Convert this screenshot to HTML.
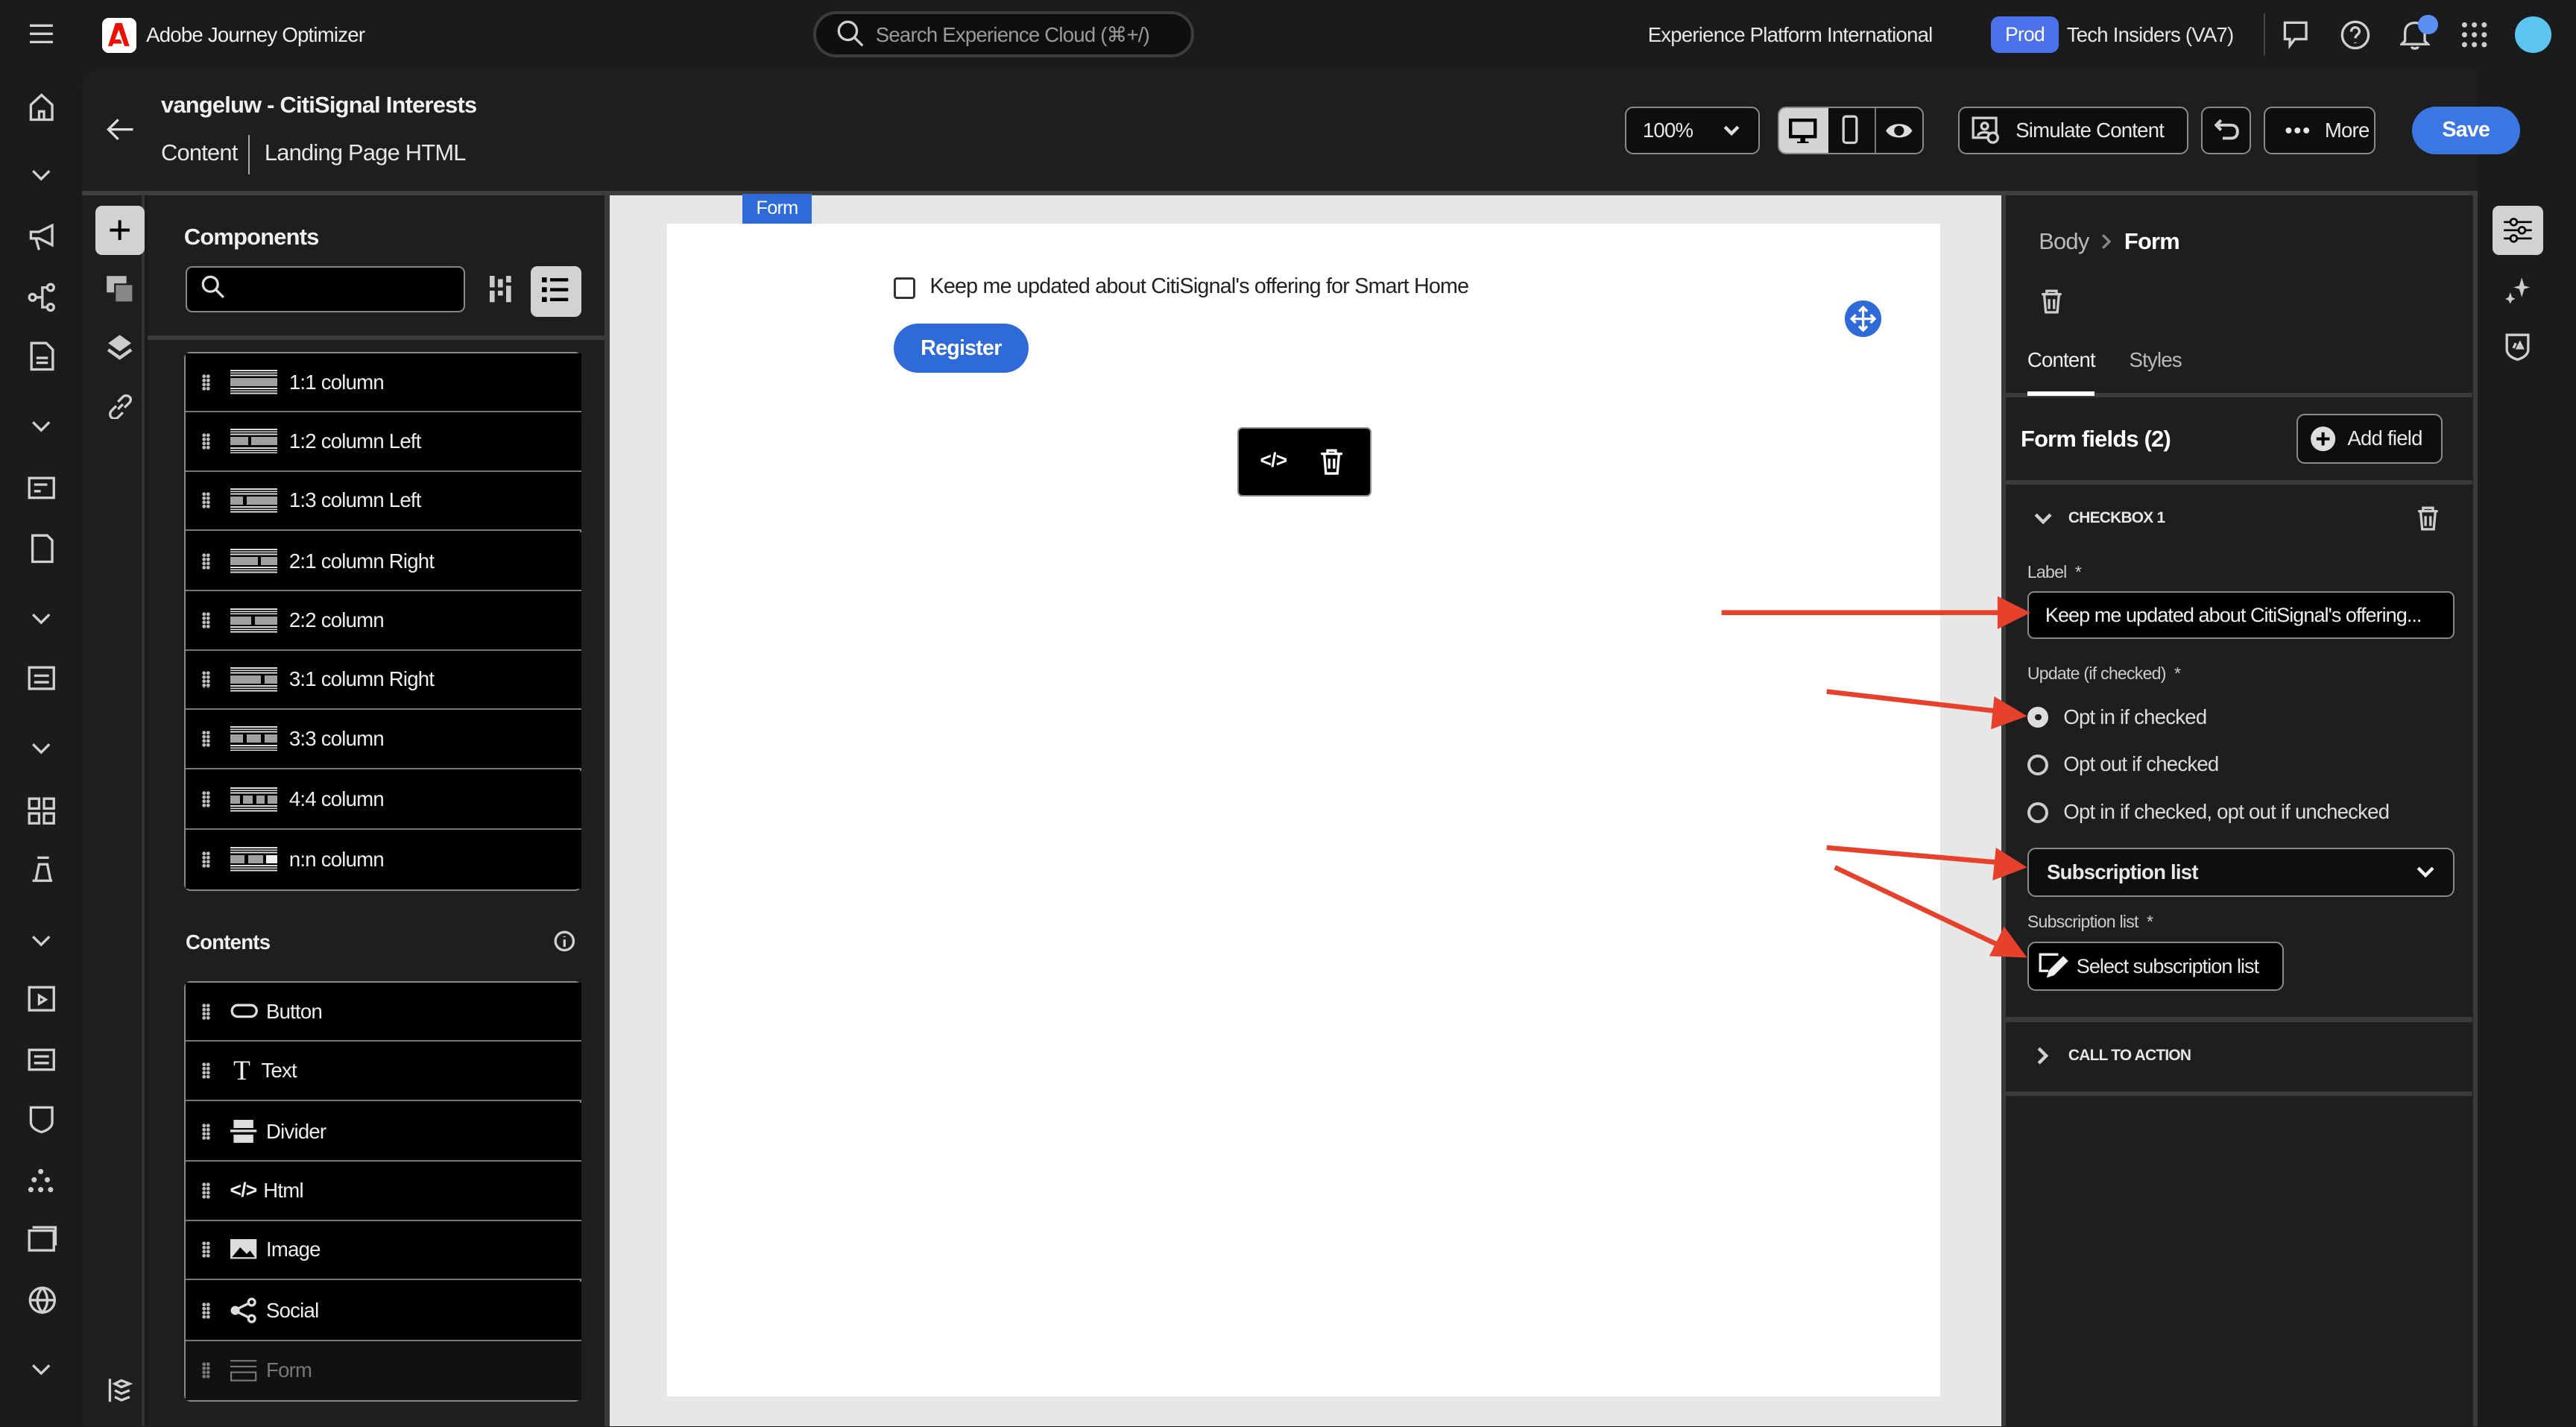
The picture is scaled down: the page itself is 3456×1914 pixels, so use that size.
<!DOCTYPE html>
<html><head><meta charset="utf-8">
<style>
*{box-sizing:border-box;margin:0;padding:0}
html,body{width:3456px;height:1914px;overflow:hidden;background:#1b1b1b}
#w{zoom:2.20408;width:1568px;height:868px;position:relative;font-family:"Liberation Sans",sans-serif;color:#e6e6e6;font-size:13px;background:#1b1b1b;letter-spacing:-0.35px}
.a{position:absolute}
.ico{position:absolute;stroke:#d0d0d0;fill:none;stroke-width:1.5}
.btn{position:absolute;border:1px solid #8a8a8a;border-radius:5px;background:#0e0e0e;color:#e8e8e8;display:flex;align-items:center;white-space:nowrap}
.row{position:absolute;left:113px;width:241px;height:36px;background:#000;border-bottom:1px solid #777;display:flex;align-items:center;font-size:12.5px;color:#eee}
.row .d{width:5px;height:10px;margin-left:10px;margin-right:12px;background-image:radial-gradient(circle,#bbb 1px,transparent 1.2px);background-size:2.5px 2.5px}
.lay{width:29px;height:15px;margin-right:7px;position:relative;flex:none}
.lay:before,.lay:after{content:"";position:absolute;left:0;width:29px;height:4px;background:repeating-linear-gradient(#ddd 0 0.8px,transparent 0.8px 1.5px)}
.lay:before{top:0}.lay:after{bottom:0}
.lay i{position:absolute;top:5px;height:5px;background:#a0a0a0}
.radio{position:absolute;left:1234px;width:13px;height:13px;border:2px solid #ccc;border-radius:50%}
</style></head><body><div id="w">

<!-- top bar -->
<svg class="ico" style="left:18px;top:14px" width="14" height="13"><path d="M0 1.5H14M0 6.5H14M0 11.5H14"/></svg>
<div class="a" style="left:62px;top:11px;width:21px;height:21px;background:#fff;border-radius:4px"></div>
<svg class="a" style="left:66px;top:14px" width="13" height="14"><path d="M4.5 0H8.5L13 14H10L6.5 4L4.2 10H7.5L8.5 12.5H3.2L2.5 14H0Z" fill="#eb1000"/></svg>
<div class="a" style="left:89px;top:14px;font-size:12.5px;color:#eee">Adobe Journey Optimizer</div>
<div class="a" style="left:495px;top:7px;width:232px;height:28px;border:2px solid #3c3c3c;border-radius:14px;background:#0f0f0f"></div>
<svg class="ico" style="left:509px;top:12px" width="18" height="18"><circle cx="7" cy="7" r="5.5"/><path d="M11 11L16 16"/></svg>
<div class="a" style="left:533px;top:14px;color:#9a9a9a;font-size:12.5px">Search Experience Cloud (⌘+/)</div>
<div class="a" style="left:1003px;top:14px;font-size:12.5px">Experience Platform International</div>
<div class="a" style="left:1212px;top:10px;width:41px;height:22px;background:#4b72ea;border-radius:5px;color:#fff;font-size:12px;text-align:center;line-height:22px">Prod</div>
<div class="a" style="left:1258px;top:14px;font-size:12.5px">Tech Insiders (VA7)</div>
<div class="a" style="left:1378px;top:8px;width:1px;height:26px;background:#444"></div>
<svg class="ico" style="left:1389px;top:12px" width="18" height="18"><path d="M2 2H15V12H8L5 16V12H2Z"/></svg>
<svg class="ico" style="left:1424px;top:12px" width="19" height="19"><circle cx="9.5" cy="9.5" r="8"/><path d="M7 7.5C7 4 12 4 12 7.5C12 9 9.5 9.5 9.5 11.5M9.5 14V14.5"/></svg>
<svg class="ico" style="left:1461px;top:11px" width="18" height="20"><path d="M3 14V9C3 5 5.5 3 9 3C12.5 3 15 5 15 9V14L17 16H1Z M7 17.5C7.5 19 10.5 19 11 17.5"/></svg>
<div class="a" style="left:1472px;top:9px;width:12px;height:12px;border-radius:50%;background:#5a8ef0"></div>
<svg class="a" style="left:1498px;top:13px" width="16" height="16" fill="#ccc"><circle cx="2" cy="2" r="1.6"/><circle cx="8" cy="2" r="1.6"/><circle cx="14" cy="2" r="1.6"/><circle cx="2" cy="8" r="1.6"/><circle cx="8" cy="8" r="1.6"/><circle cx="14" cy="8" r="1.6"/><circle cx="2" cy="14" r="1.6"/><circle cx="8" cy="14" r="1.6"/><circle cx="14" cy="14" r="1.6"/></svg>
<div class="a" style="left:1531px;top:10px;width:22px;height:22px;border-radius:50%;background:#5bc4ef"></div>

<!-- left rail icons -->
<svg class="ico" style="left:17px;top:56px" width="17" height="18"><path d="M2 8L8.5 2L15 8V17H2Z M7 17V12H10V17"/></svg>
<svg class="ico" style="left:19px;top:103px" width="12" height="8"><path d="M1 1L6 6L11 1"/></svg>
<svg class="ico" style="left:17px;top:136px" width="18" height="18"><path d="M2 5H7L15 1V13L7 9H2Z M5 9L7 16"/></svg>
<svg class="ico" style="left:17px;top:172px" width="18" height="18"><circle cx="3" cy="9" r="2"/><circle cx="14" cy="3" r="2"/><circle cx="14" cy="15" r="2"/><path d="M5 9H9V3H12M9 9V15H12"/></svg>
<svg class="ico" style="left:18px;top:208px" width="15" height="18"><path d="M1 1H10L14 5V17H1Z M4 10H11M4 13H11"/></svg>
<svg class="ico" style="left:19px;top:256px" width="12" height="8"><path d="M1 1L6 6L11 1"/></svg>
<svg class="ico" style="left:17px;top:290px" width="18" height="16"><rect x="1" y="1" width="15" height="12"/><path d="M4 5H12M4 9H8"/></svg>
<svg class="ico" style="left:17px;top:325px" width="18" height="18"><path d="M3 1H12L15 4V17H3Z"/></svg>
<svg class="ico" style="left:19px;top:373px" width="12" height="8"><path d="M1 1L6 6L11 1"/></svg>
<svg class="ico" style="left:17px;top:405px" width="18" height="16"><rect x="1" y="1" width="15" height="13"/><path d="M4 6H13M4 10H13"/></svg>
<svg class="ico" style="left:19px;top:452px" width="12" height="8"><path d="M1 1L6 6L11 1"/></svg>
<svg class="ico" style="left:17px;top:485px" width="17" height="17"><rect x="1" y="1" width="6" height="6"/><rect x="10" y="1" width="6" height="6"/><rect x="1" y="10" width="6" height="6"/><rect x="10" y="10" width="6" height="6"/></svg>
<svg class="ico" style="left:17px;top:520px" width="18" height="18"><path d="M3 16H15M5 16L7 6H12L14 16M6 2H13"/></svg>
<svg class="ico" style="left:19px;top:569px" width="12" height="8"><path d="M1 1L6 6L11 1"/></svg>
<svg class="ico" style="left:17px;top:600px" width="18" height="17"><rect x="1" y="1" width="15" height="14"/><path d="M7 6L11 8.5L7 11Z"/></svg>
<svg class="ico" style="left:17px;top:638px" width="18" height="15"><rect x="1" y="1" width="15" height="12"/><path d="M4 5H13M4 9H13"/></svg>
<svg class="ico" style="left:17px;top:672px" width="17" height="18"><path d="M2 2H15V11C15 14 12 16 8.5 17C5 16 2 14 2 11Z"/></svg>
<svg class="a" style="left:17px;top:711px" width="17" height="16" fill="#ccc"><circle cx="8" cy="2" r="1.6"/><circle cx="4" cy="7" r="1.6"/><circle cx="12" cy="7" r="1.6"/><circle cx="2" cy="13" r="1.6"/><circle cx="8" cy="13" r="1.6"/><circle cx="14" cy="13" r="1.6"/></svg>
<svg class="ico" style="left:17px;top:746px" width="18" height="16"><rect x="1" y="3" width="15" height="12"/><path d="M3 1H17V12"/></svg>
<svg class="ico" style="left:17px;top:782px" width="18" height="18"><circle cx="9" cy="9" r="7.5"/><path d="M1.5 9H16.5M9 1.5C5 6 5 12 9 16.5C13 12 13 6 9 1.5"/></svg>
<svg class="ico" style="left:19px;top:830px" width="12" height="8"><path d="M1 1L6 6L11 1"/></svg>

<!-- header area -->
<div class="a" style="left:50px;top:42px;width:1458px;height:76px;background:#1e1e1e;border-radius:12px 0 0 0"></div>
<div class="a" style="left:50px;top:116px;width:1458px;height:3px;background:#3d3d3d"></div>
<svg class="ico" style="left:64px;top:71px;stroke:#ddd" width="18" height="16"><path d="M17 8H2M8 2L2 8L8 14"/></svg>
<div class="a" style="left:98px;top:56px;font-size:14px;font-weight:bold;color:#f0f0f0">vangeluw - CitiSignal Interests</div>
<div class="a" style="left:98px;top:85px;font-size:14px;color:#e6e6e6">Content</div>
<div class="a" style="left:151px;top:82px;width:1px;height:24px;background:#aaa"></div>
<div class="a" style="left:161px;top:85px;font-size:14px;color:#e6e6e6">Landing Page HTML</div>

<div class="btn" style="left:989px;top:65px;width:82px;height:29px;padding-left:10px;font-size:12.5px">100%</div>
<svg class="ico" style="left:1049px;top:76px;stroke:#ddd;stroke-width:2" width="10" height="7"><path d="M1 1L5 5L9 1"/></svg>
<div class="btn" style="left:1082px;top:65px;width:89px;height:29px;overflow:hidden">
 <div style="width:30px;height:29px;background:#d4d4d4"></div><div style="width:29px;height:29px;border-right:1px solid #777"></div></div>
<svg class="a" style="left:1089px;top:72px" width="17" height="16"><rect x="1" y="1" width="15" height="10" fill="#d4d4d4" stroke="#000" stroke-width="2"/><path d="M7 12H10V14H12V15H5V14H7Z" fill="#000"/></svg>
<svg class="ico" style="left:1121px;top:70px" width="10" height="18"><rect x="1" y="1" width="8" height="16" rx="1.5"/></svg>
<svg class="a" style="left:1147px;top:73px" width="18" height="13"><path d="M1 6.5C4 1 14 1 17 6.5C14 12 4 12 1 6.5Z" fill="#ddd"/><circle cx="9" cy="6.5" r="3" fill="#111"/></svg>
<div class="btn" style="left:1192px;top:65px;width:140px;height:29px;padding-left:34px;font-size:12.5px">Simulate Content</div>
<svg class="ico" style="left:1200px;top:71px" width="18" height="17"><rect x="1" y="1" width="14" height="12"/><circle cx="8" cy="6" r="2"/><path d="M4 12C4 9 12 9 12 12"/><circle cx="13" cy="13" r="3" fill="#0e0e0e"/></svg>
<div class="btn" style="left:1340px;top:65px;width:30px;height:29px"></div>
<svg class="ico" style="left:1348px;top:72px;stroke-width:1.8" width="16" height="14"><path d="M4 1L1 4L4 7M1 4H10C13 4 14 6 14 8C14 10 13 12 10 12H5"/></svg>
<div class="btn" style="left:1378px;top:65px;width:68px;height:29px;padding-left:12px;font-size:12.5px"><span style="letter-spacing:1px;font-weight:bold;margin-right:8px">•••</span>More</div>
<div class="a" style="left:1468px;top:65px;width:66px;height:29px;border-radius:15px;background:#3a77e2;color:#fff;font-weight:bold;font-size:13px;text-align:center;line-height:29px">Save</div>

<!-- second rail -->
<div class="a" style="left:50px;top:119px;width:38px;height:749px;background:#1e1e1e;border-right:2px solid #333"></div>
<div class="a" style="left:58px;top:125px;width:30px;height:30px;background:#d2d2d2;border-radius:4px"></div>
<svg class="a" style="left:65px;top:132px" width="16" height="16"><path d="M8 2V14M2 8H14" stroke="#000" stroke-width="1.8"/></svg>
<svg class="a" style="left:64px;top:167px" width="18" height="18"><rect x="1" y="1" width="12" height="10" fill="#bbb"/><rect x="6" y="6" width="11" height="11" fill="#888" stroke="#1e1e1e"/></svg>
<svg class="a" style="left:65px;top:203px" width="16" height="18"><path d="M8 1L15 6L8 11L1 6Z" fill="#ccc"/><path d="M1 10L8 15L15 10" stroke="#ccc" stroke-width="2" fill="none"/></svg>
<svg class="ico" style="left:66px;top:240px" width="15" height="15"><path d="M6 9L9 6M5 7L2 10C1 11 1 13 2 14C3 15 5 15 6 14L9 11M10 8L13 5C14 4 14 2 13 1.5C12 0.5 10 0.5 9 1.5L6 4.5"/></svg>
<svg class="ico" style="left:65px;top:837px" width="18" height="18"><path d="M2 2V16M5 5L9 3L14 5L9 7Z M5 9L9 11L14 9M5 13L9 15L14 13"/></svg>

<!-- components panel -->
<div class="a" style="left:90px;top:119px;width:278px;height:749px;background:#1e1e1e"></div>
<div class="a" style="left:368px;top:119px;width:3px;height:749px;background:#3a3a3a"></div>
<div class="a" style="left:112px;top:136px;font-size:14px;font-weight:bold;color:#f0f0f0">Components</div>
<div class="a" style="left:113px;top:162px;width:170px;height:28px;background:#000;border:1px solid #888;border-radius:4px"></div>
<svg class="ico" style="left:122px;top:167px;stroke:#ddd" width="16" height="16"><circle cx="6" cy="6" r="4.5"/><path d="M9.5 9.5L14 14"/></svg>
<svg class="a" style="left:298px;top:168px" width="15" height="16" fill="#ccc"><rect x="0" y="0" width="3" height="7"/><rect x="0" y="9" width="3" height="7"/><rect x="5" y="2" width="3" height="5"/><rect x="5" y="9" width="3" height="3"/><rect x="10" y="0" width="3" height="4"/><rect x="10" y="6" width="3" height="10"/></svg>
<div class="a" style="left:323px;top:162px;width:31px;height:31px;background:#d2d2d2;border-radius:4px"></div>
<svg class="a" style="left:330px;top:169px" width="16" height="16" fill="#000"><rect x="0" y="0" width="3" height="3"/><rect x="0" y="6" width="3" height="3"/><rect x="0" y="12" width="3" height="3"/><rect x="5" y="0.5" width="11" height="2"/><rect x="5" y="6.5" width="11" height="2"/><rect x="5" y="12.5" width="11" height="2"/></svg>
<div class="a" style="left:90px;top:204px;width:278px;height:3px;background:#3a3a3a"></div>
<div class="a" style="left:112px;top:214px;width:242px;height:328px;border:1px solid #888;border-radius:4px;background:#000"></div>

<div class="row" style="top:215px"><span class="d"></span><span class="lay"><i style="left:0;width:29px"></i></span>1:1 column</div>
<div class="row" style="top:251px"><span class="d"></span><span class="lay"><i style="left:0;width:11px"></i><i style="left:13px;width:16px"></i></span>1:2 column Left</div>
<div class="row" style="top:287px"><span class="d"></span><span class="lay"><i style="left:0;width:8px"></i><i style="left:10px;width:19px"></i></span>1:3 column Left</div>
<div class="row" style="top:324px"><span class="d"></span><span class="lay"><i style="left:0;width:17px"></i><i style="left:19px;width:10px"></i></span>2:1 column Right</div>
<div class="row" style="top:360px"><span class="d"></span><span class="lay"><i style="left:0;width:13px"></i><i style="left:15px;width:14px"></i></span>2:2 column</div>
<div class="row" style="top:396px"><span class="d"></span><span class="lay"><i style="left:0;width:19px"></i><i style="left:21px;width:8px"></i></span>3:1 column Right</div>
<div class="row" style="top:432px"><span class="d"></span><span class="lay"><i style="left:0;width:8px"></i><i style="left:10px;width:9px"></i><i style="left:21px;width:8px"></i></span>3:3 column</div>
<div class="row" style="top:469px"><span class="d"></span><span class="lay"><i style="left:0;width:6px"></i><i style="left:8px;width:6px"></i><i style="left:16px;width:5px"></i><i style="left:23px;width:6px"></i></span>4:4 column</div>
<div class="row" style="top:505px;border-bottom:none"><span class="d"></span><span class="lay"><i style="left:0;width:9px"></i><i style="left:11px;width:9px"></i><i style="left:22px;width:7px;background:#eee"></i></span>n:n column</div>

<div class="a" style="left:113px;top:566px;font-size:12.5px;font-weight:bold;color:#eee">Contents</div>
<svg class="ico" style="left:337px;top:566px" width="13" height="13"><circle cx="6.5" cy="6.5" r="5.5"/><path d="M6.5 5.5V10M6.5 3.5V4"/></svg>
<div class="a" style="left:112px;top:597px;width:242px;height:256px;border:1px solid #888;border-radius:4px;background:#000"></div>
<div class="row" style="top:598px"><span class="d"></span><svg width="18" height="10" style="margin-right:4px"><rect x="1" y="1" width="15" height="7" rx="3.5" fill="none" stroke="#ddd" stroke-width="1.5"/></svg>Button</div>
<div class="row" style="top:634px"><span class="d"></span><span style="font-family:'Liberation Serif',serif;font-size:17px;margin-right:7px;margin-left:2px">T</span>Text</div>
<div class="row" style="top:671px"><span class="d"></span><svg width="18" height="14" style="margin-right:4px" fill="#ddd"><rect x="2" y="0" width="12" height="5"/><rect x="0" y="6" width="16" height="1.5"/><rect x="2" y="9" width="12" height="5"/></svg>Divider</div>
<div class="row" style="top:707px"><span class="d"></span><span style="margin-right:4px;font-weight:bold;font-size:12px">&lt;/&gt;</span>Html</div>
<div class="row" style="top:743px"><span class="d"></span><svg width="18" height="13" style="margin-right:4px"><rect x="0" y="0" width="16" height="12" fill="#ddd"/><path d="M1 11L6 5L10 9L12 7L15 11Z" fill="#000"/></svg>Image</div>
<div class="row" style="top:780px"><span class="d"></span><svg width="18" height="16" style="margin-right:4px" stroke="#ddd" stroke-width="1.5" fill="none"><circle cx="3" cy="8" r="2" fill="#ddd"/><circle cx="13" cy="3" r="2"/><circle cx="13" cy="13" r="2"/><path d="M4.5 7L11 3.8M4.5 9L11 12.2"/></svg>Social</div>
<div class="row" style="top:816px;background:#111;border-bottom:none;color:#777;height:36px"><span class="d" style="opacity:.6"></span><svg width="18" height="14" style="margin-right:4px" stroke="#777" fill="none"><path d="M0 1H16M0 4.5H16"/><rect x="0.5" y="8" width="15" height="5"/></svg>Form</div>

<!-- canvas -->
<div class="a" style="left:371px;top:119px;width:847px;height:749px;background:#e7e7e7"></div>
<div class="a" style="left:406px;top:136px;width:775px;height:714px;background:#fff"></div>
<div class="a" style="left:452px;top:118px;width:42px;height:18px;background:#2f6ad9;color:#fff;font-size:11.5px;text-align:center;line-height:18px">Form</div>
<div class="a" style="left:544px;top:169px;width:13px;height:13px;border:1.5px solid #333;border-radius:2px"></div>
<div class="a" style="left:566px;top:167px;font-size:13px;color:#222">Keep me updated about CitiSignal's offering for Smart Home</div>
<div class="a" style="left:544px;top:197px;width:82px;height:30px;border-radius:15px;background:#2f6ad9;color:#fff;font-size:13px;font-weight:bold;text-align:center;line-height:30px">Register</div>
<div class="a" style="left:1123px;top:183px;width:22px;height:22px;border-radius:50%;background:#2f6ad9"></div>
<svg class="a" style="left:1126px;top:186px" width="16" height="16" stroke="#fff" stroke-width="1.5" fill="none"><path d="M8 1V15M1 8H15M5.5 3.5L8 1L10.5 3.5M5.5 12.5L8 15L10.5 12.5M3.5 5.5L1 8L3.5 10.5M12.5 5.5L15 8L12.5 10.5"/></svg>
<div class="a" style="left:753px;top:260px;width:82px;height:42px;background:#000;border:1px solid #888;border-radius:3px;color:#fff"></div>
<div class="a" style="left:767px;top:273px;color:#fff;font-size:12px;font-weight:bold">&lt;/&gt;</div>
<svg class="ico" style="left:803px;top:273px;stroke:#fff" width="15" height="16"><path d="M1 3H14M5 3V1H10V3M3 3L4 15H11L12 3M6 6V12M9 6V12"/></svg>

<!-- right panel -->
<div class="a" style="left:1218px;top:119px;width:290px;height:749px;background:#1e1e1e;border-left:3px solid #3a3a3a;border-right:3px solid #3a3a3a"></div>
<div class="a" style="left:1241px;top:139px;font-size:14px;color:#bbb">Body</div>
<svg class="ico" style="left:1279px;top:142px;stroke:#888;stroke-width:1.5" width="6" height="10"><path d="M1 1L5 5L1 9"/></svg>
<div class="a" style="left:1293px;top:139px;font-size:14px;font-weight:bold;color:#fff">Form</div>
<svg class="ico" style="left:1242px;top:176px;stroke:#ccc" width="14" height="15"><path d="M1 3H13M4 3V1H10V3M2.5 3L3.5 14H10.5L11.5 3M5.5 6V12M8.5 6V12"/></svg>
<div class="a" style="left:1234px;top:212px;font-size:12.5px;color:#eee">Content</div>
<div class="a" style="left:1296px;top:212px;font-size:12.5px;color:#bbb">Styles</div>
<div class="a" style="left:1221px;top:239px;width:284px;height:3px;background:#3a3a3a"></div>
<div class="a" style="left:1234px;top:238px;width:41px;height:3px;background:#fff"></div>
<div class="a" style="left:1230px;top:259px;font-size:14px;font-weight:bold;color:#fff">Form fields (2)</div>
<div class="btn" style="left:1398px;top:252px;width:89px;height:30px;padding-left:30px;font-size:12.5px">Add field</div>
<svg class="a" style="left:1406px;top:259px" width="16" height="16"><circle cx="8" cy="8" r="7.5" fill="#ddd"/><path d="M8 4V12M4 8H12" stroke="#000" stroke-width="1.8"/></svg>
<div class="a" style="left:1221px;top:292px;width:284px;height:3px;background:#3a3a3a"></div>
<svg class="ico" style="left:1238px;top:312px;stroke-width:2" width="11" height="7"><path d="M1 1L5.5 5.5L10 1"/></svg>
<div class="a" style="left:1259px;top:310px;font-size:9.5px;font-weight:bold;color:#e6e6e6">CHECKBOX 1</div>
<svg class="ico" style="left:1471px;top:308px;stroke:#ccc" width="14" height="15"><path d="M1 3H13M4 3V1H10V3M2.5 3L3.5 14H10.5L11.5 3M5.5 6V12M8.5 6V12"/></svg>
<div class="a" style="left:1234px;top:342px;font-size:10.5px;color:#ccc">Label &nbsp;*</div>
<div class="a" style="left:1234px;top:360px;width:260px;height:29px;background:#000;border:1px solid #888;border-radius:4px;padding:6px 10px;font-size:12.3px;color:#eee;white-space:nowrap;overflow:hidden;letter-spacing:-0.45px">Keep me updated about CitiSignal's offering...</div>
<div class="a" style="left:1234px;top:404px;font-size:10.5px;color:#ccc">Update (if checked) &nbsp;*</div>
<div class="radio" style="top:430px;background:#ddd;border-color:#ddd"></div>
<div class="a" style="left:1238.5px;top:434.5px;width:4px;height:4px;background:#1e1e1e;border-radius:50%"></div>
<div class="a" style="left:1256px;top:429px;font-size:12.5px;color:#ddd">Opt in if checked</div>
<div class="radio" style="top:459px"></div>
<div class="a" style="left:1256px;top:458px;font-size:12.5px;color:#ddd">Opt out if checked</div>
<div class="radio" style="top:488px"></div>
<div class="a" style="left:1256px;top:487px;font-size:12.5px;color:#ddd">Opt in if checked, opt out if unchecked</div>
<div class="btn" style="left:1234px;top:516px;width:260px;height:30px;padding-left:11px;font-size:12.5px;font-weight:bold">Subscription list</div>
<svg class="ico" style="left:1471px;top:527px;stroke:#eee;stroke-width:2" width="11" height="7"><path d="M1 1L5.5 5.5L10 1"/></svg>
<div class="a" style="left:1234px;top:555px;font-size:10.5px;color:#ccc">Subscription list &nbsp;*</div>
<div class="btn" style="left:1234px;top:573px;width:156px;height:30px;padding-left:29px;font-size:12.3px;background:#000;letter-spacing:-0.45px">Select subscription list</div>
<svg class="ico" style="left:1241px;top:580px;stroke:#eee" width="19" height="17"><path d="M12 1H1V11H6"/><path d="M15 3L17 5L9 13L6 14L7 11Z" fill="#eee"/></svg>
<div class="a" style="left:1221px;top:619px;width:284px;height:3px;background:#3a3a3a"></div>
<svg class="ico" style="left:1240px;top:637px;stroke-width:2" width="7" height="11"><path d="M1 1L5.5 5.5L1 10"/></svg>
<div class="a" style="left:1259px;top:637px;font-size:9.5px;font-weight:bold;color:#e6e6e6">CALL TO ACTION</div>
<div class="a" style="left:1221px;top:664px;width:284px;height:3px;background:#3a3a3a"></div>

<!-- right rail -->
<div class="a" style="left:1517px;top:125px;width:31px;height:30px;background:#d2d2d2;border-radius:4px"></div>
<svg class="a" style="left:1523px;top:131px" width="19" height="18" stroke="#000" stroke-width="1.2" fill="none"><path d="M1 4H18M1 9H18M1 14H18"/><circle cx="7" cy="4" r="2" fill="#d2d2d2"/><circle cx="12" cy="9" r="2" fill="#d2d2d2"/><circle cx="7" cy="14" r="2" fill="#d2d2d2"/></svg>
<svg class="a" style="left:1524px;top:168px" width="17" height="17" fill="#ccc"><path d="M11 1L12.5 6L16 7L12.5 8L11 13L9.5 8L6 7L9.5 6Z"/><path d="M4 10L5 13L7 14L5 15L4 17L3 15L1 14L3 13Z"/></svg>
<svg class="ico" style="left:1525px;top:203px" width="15" height="17"><path d="M1 1H14V10C14 13 11 15 7.5 16C4 15 1 13 1 10Z M5 9L6.5 6M7.5 9L9 6L10.5 9Z"/></svg>

<!-- red arrows -->
<svg class="a" style="left:1040px;top:350px" width="200" height="250" stroke="#e8412b" stroke-width="3" fill="#e8412b">
<path d="M8 23H180" /><path d="M196 23L176 13V33Z" stroke="none"/>
<path d="M72 71L176 83"/><path d="M194 86L174 74L172 94Z" stroke="none"/>
<path d="M72 166L176 175"/><path d="M194 178L175 166L173 186Z" stroke="none"/>
<path d="M77 178L178 226"/><path d="M194 233L180 214L171 232Z" stroke="none"/>
</svg>

</div></body></html>
